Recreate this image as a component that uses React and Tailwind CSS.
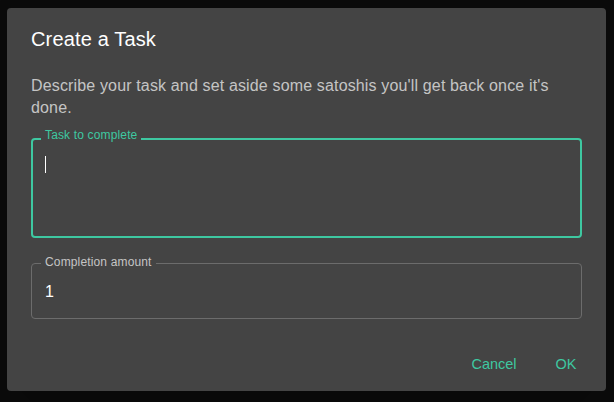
import React from "react";

export default function App() {
  return (
    <div
      className="w-[614px] h-[402px] bg-[#0b0b0b] pt-[8px] pl-[7px]"
      style={{ fontFamily: '"Liberation Sans", Arial, sans-serif' }}
    >
      <div className="w-[599px] h-[383px] bg-[#444444] rounded-[4px] flex flex-col shadow-2xl">
        <div className="px-[24px] pt-[15px]">
          <h2 className="text-[20px] leading-[32px] text-white font-normal tracking-[0.15px]">Create a Task</h2>
          <p className="mt-[20px] text-[16px] leading-[22px] text-white/70 tracking-[0.15px]">
            Describe your task and set aside some satoshis you'll get back once it's done.
          </p>

          <div className="relative mt-[19px] h-[100px] rounded-[4px] border-2 border-[#3ec8a1]">
            <span className="absolute left-[8px] -top-[11px] px-[4px] bg-[#444444] text-[12px] leading-[12px] text-[#3ec8a1] tracking-[0.15px]">
              Task to complete
            </span>
            <span className="block ml-[12px] mt-[16px] w-px h-[17px] bg-white" />
          </div>

          <div className="relative mt-[25px] h-[56px] rounded-[4px] border border-[#6c6c6c] flex items-center">
            <span className="absolute left-[9px] -top-[8px] px-[4px] bg-[#444444] text-[12px] leading-[12px] text-white/70 tracking-[0.15px]">
              Completion amount
            </span>
            <span className="ml-[13px] mt-[1px] text-[16px] leading-[20px] text-white">1</span>
          </div>
        </div>

        <div className="mt-auto flex justify-end gap-[8px] p-[8px]">
          <button className="min-w-[64px] h-[36px] px-[8px] rounded-[4px] text-[14.5px] text-[#3ec8a1]">
            Cancel
          </button>
          <button className="min-w-[64px] h-[36px] px-[8px] rounded-[4px] text-[14.5px] text-[#3ec8a1]">
            OK
          </button>
        </div>
      </div>
    </div>
  );
}
